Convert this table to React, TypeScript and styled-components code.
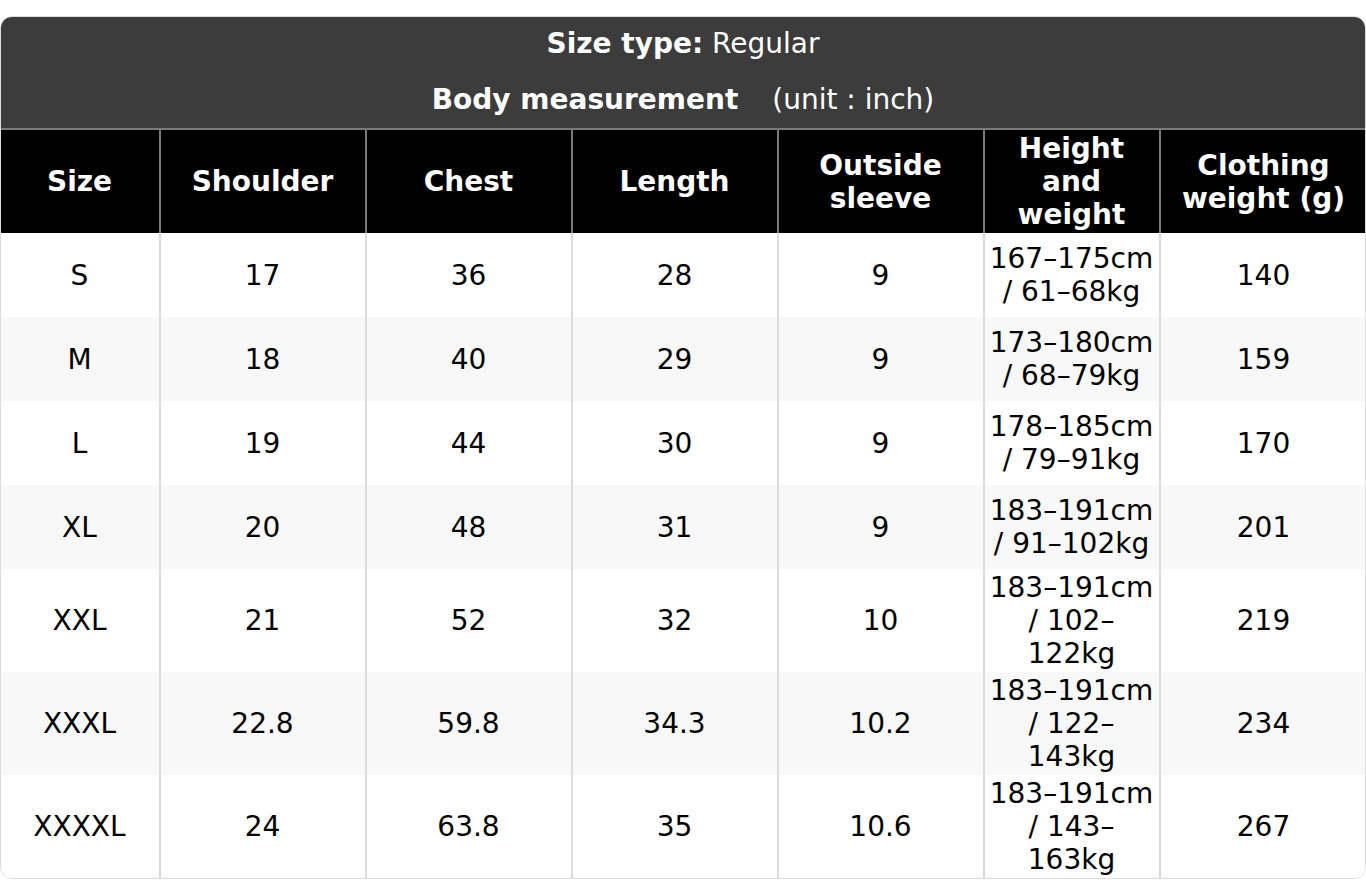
import React from 'react';
import styled, { createGlobalStyle } from 'styled-components';

const GlobalStyle = createGlobalStyle`
  html, body {
    margin: 0;
    padding: 0;
    background: #ffffff;
  }
  body {
    font-family: 'DejaVu Sans', 'Liberation Sans', sans-serif;
    color: #000000;
  }
`;

interface SizeRow {
  size: string;
  shoulder: string;
  chest: string;
  length: string;
  sleeve: string;
  fit: string[];
  weight: string;
}

const rows: SizeRow[] = [
  { size: 'S', shoulder: '17', chest: '36', length: '28', sleeve: '9', fit: ['167–175cm', '/ 61–68kg'], weight: '140' },
  { size: 'M', shoulder: '18', chest: '40', length: '29', sleeve: '9', fit: ['173–180cm', '/ 68–79kg'], weight: '159' },
  { size: 'L', shoulder: '19', chest: '44', length: '30', sleeve: '9', fit: ['178–185cm', '/ 79–91kg'], weight: '170' },
  { size: 'XL', shoulder: '20', chest: '48', length: '31', sleeve: '9', fit: ['183–191cm', '/ 91–102kg'], weight: '201' },
  { size: 'XXL', shoulder: '21', chest: '52', length: '32', sleeve: '10', fit: ['183–191cm', '/ 102–', '122kg'], weight: '219' },
  { size: 'XXXL', shoulder: '22.8', chest: '59.8', length: '34.3', sleeve: '10.2', fit: ['183–191cm', '/ 122–', '143kg'], weight: '234' },
  { size: 'XXXXL', shoulder: '24', chest: '63.8', length: '35', sleeve: '10.6', fit: ['183–191cm', '/ 143–', '163kg'], weight: '267' },
];

const columns = [159, 206, 206, 206, 206, 176, 207];

const headings: string[][] = [
  ['Size'],
  ['Shoulder'],
  ['Chest'],
  ['Length'],
  ['Outside', 'sleeve'],
  ['Height', 'and', 'weight'],
  ['Clothing', 'weight (g)'],
];

const App: React.FC = () => {
  return (
    <>
      <GlobalStyle />
      <Page>
        <Card>
          <Caption>
            <CaptionLine>
              <b>Size type:</b> Regular
            </CaptionLine>
            <CaptionLine>
              <b>Body measurement</b>
              <Unit>(unit : inch)</Unit>
            </CaptionLine>
          </Caption>
          <Table>
            <colgroup>
              {columns.map((w, i) => (
                <col key={i} style={{ width: w }} />
              ))}
            </colgroup>
            <thead>
              <tr>
                {headings.map((lines, i) => (
                  <HeadCell key={i}>
                    {lines.map((l, j) => (
                      <Line key={j}>{l}</Line>
                    ))}
                  </HeadCell>
                ))}
              </tr>
            </thead>
            <tbody>
              {rows.map((r, i) => (
                <BodyRow key={r.size} $striped={i % 2 === 1}>
                  <Cell>{r.size}</Cell>
                  <Cell>{r.shoulder}</Cell>
                  <Cell>{r.chest}</Cell>
                  <Cell>{r.length}</Cell>
                  <Cell>{r.sleeve}</Cell>
                  <Cell>
                    {r.fit.map((l, j) => (
                      <Line key={j}>{l}</Line>
                    ))}
                  </Cell>
                  <Cell>{r.weight}</Cell>
                </BodyRow>
              ))}
            </tbody>
          </Table>
        </Card>
      </Page>
    </>
  );
};

export default App;

const Page = styled.div`
  padding-top: 16px;
`;

const Card = styled.div`
  width: 1366px;
  box-sizing: border-box;
  border: 1px solid #dcdcdc;
  border-radius: 12px;
  overflow: hidden;
`;

const Caption = styled.div`
  background: #3c3c3c;
  color: #ffffff;
  display: flex;
  flex-direction: column;
  align-items: center;
  gap: 23px;
  padding: 10px 0 12px;
  font-size: 28px;
  line-height: 33px;
`;

const CaptionLine = styled.div`
  text-align: center;
  white-space: nowrap;
`;

const Unit = styled.span`
  margin-left: 34px;
`;

const Table = styled.table`
  width: 100%;
  table-layout: fixed;
  border-collapse: collapse;
  font-size: 28px;
  line-height: 33px;
`;

const HeadCell = styled.th`
  background: #000000;
  color: #ffffff;
  font-weight: bold;
  text-align: center;
  vertical-align: middle;
  padding: 2px 5px 2px 4px;
  height: 99px;
  border: 2px solid #7a7a7a;
  border-bottom: none;
  &:first-child {
    border-left: none;
  }
  &:last-child {
    border-right: none;
  }
`;

const BodyRow = styled.tr<{ $striped: boolean }>`
  background: ${({ $striped }) => ($striped ? '#f8f8f8' : '#ffffff')};
  height: 84px;
`;

const Cell = styled.td`
  text-align: center;
  vertical-align: middle;
  padding: 2px 5px 2px 4px;
  border-left: 2px solid #dcdcdc;
  border-right: 2px solid #dcdcdc;
  &:first-child {
    border-left: none;
  }
  &:last-child {
    border-right: none;
  }
`;

const Line = styled.div`
  white-space: nowrap;
`;
